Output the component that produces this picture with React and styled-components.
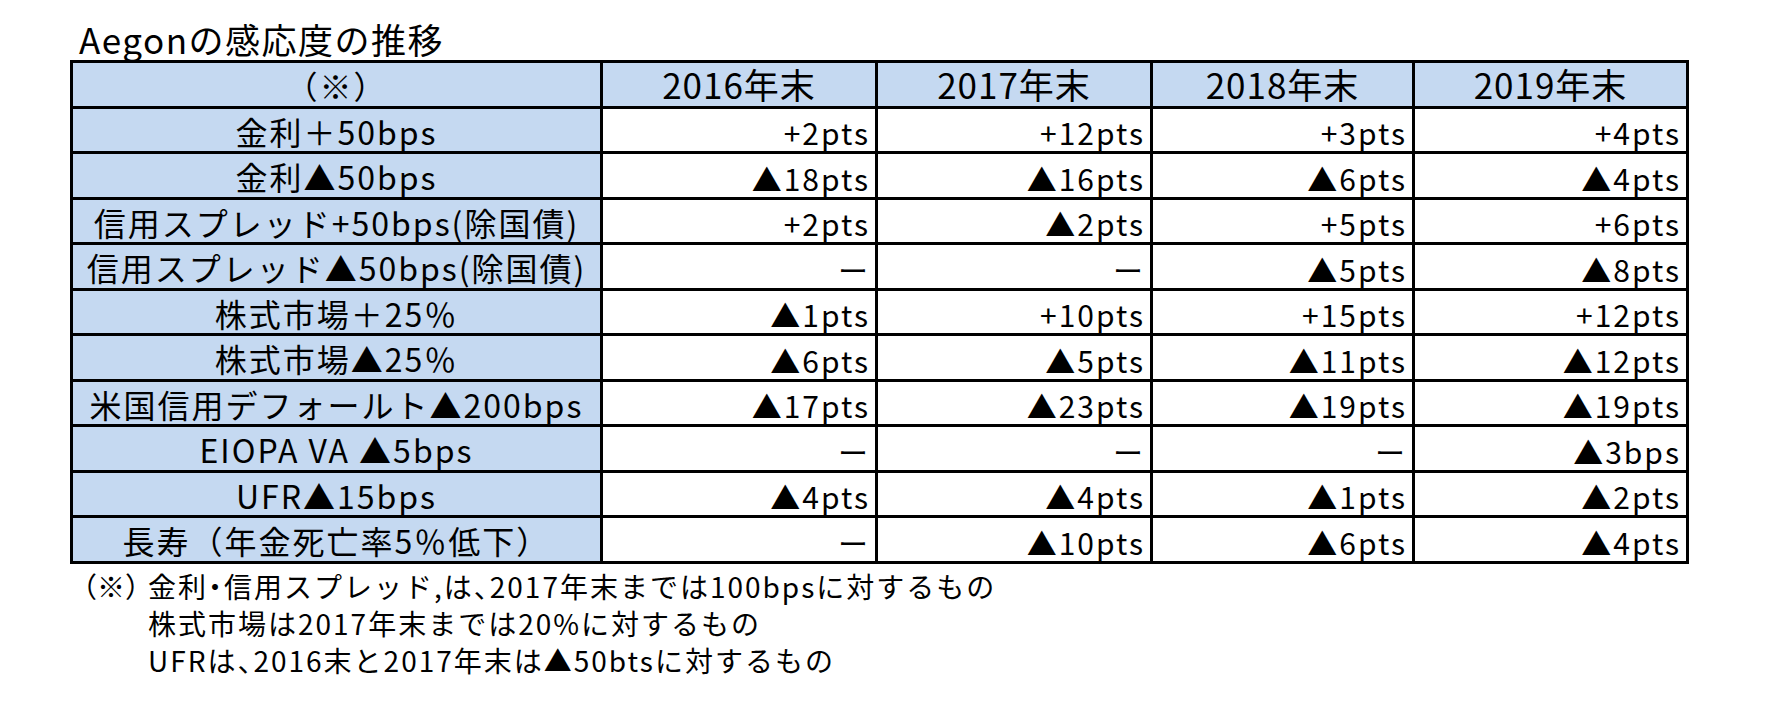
import React from 'react'
import styled, { createGlobalStyle } from 'styled-components'

const GlobalStyle = createGlobalStyle`
  html, body {
    margin: 0;
    padding: 0;
    background: #fff;
  }
  body {
    font-family: "Noto Sans CJK JP", "Noto Sans", sans-serif;
    color: #000;
  }
`

const Page = styled.div`
  width: 1772px;
  height: 703px;
  padding: 20px 0 0 70px;
  box-sizing: border-box;
`

const Title = styled.div`
  font-size: 35px;
  line-height: 38px;
  letter-spacing: 1.5px;
  margin: 0 0 2px 9px;
  white-space: nowrap;
`

const Table = styled.div`
  display: grid;
  grid-template-columns: 527px 272px 272px 259px 271px;
  grid-auto-rows: 42.5px;
  gap: 3px;
  width: fit-content;
  border: 3px solid #000;
  background: #000;
`

const Cell = styled.div`
  display: flex;
  align-items: flex-end;
  justify-content: ${p => (p.$right ? 'flex-end' : 'center')};
  padding: 0 ${p => (p.$right ? '5px' : '0')} 1px 0;
  background: ${p => (p.$blue ? '#c5d9f1' : '#fff')};
  font-size: ${p => p.$size}px;
  line-height: ${p => (p.$size > 33 ? 1.15 : 1.2)};
  letter-spacing: ${p => p.$spacing}px;
  white-space: nowrap;
`

const Notes = styled.div`
  display: grid;
  grid-template-columns: 66px auto;
  margin: 4px 0 0 12px;
  font-size: 28px;
  line-height: 37px;
  letter-spacing: 2px;
  white-space: nowrap;
  font-feature-settings: "halt";
`

const Mark = styled.span`
  grid-column: 1;
  margin-left: -13px;
  letter-spacing: 0;
  font-feature-settings: normal;
`

const NoteLine = styled.span`
  grid-column: 2;
`

const years = ['2016年末', '2017年末', '2018年末', '2019年末']

const rows = [
  ['金利＋50bps', '+2pts', '+12pts', '+3pts', '+4pts'],
  ['金利▲50bps', '▲18pts', '▲16pts', '▲6pts', '▲4pts'],
  ['信用スプレッド+50bps(除国債)', '+2pts', '▲2pts', '+5pts', '+6pts'],
  ['信用スプレッド▲50bps(除国債)', 'ー', 'ー', '▲5pts', '▲8pts'],
  ['株式市場＋25％', '▲1pts', '+10pts', '+15pts', '+12pts'],
  ['株式市場▲25％', '▲6pts', '▲5pts', '▲11pts', '▲12pts'],
  ['米国信用デフォールト▲200bps', '▲17pts', '▲23pts', '▲19pts', '▲19pts'],
  ['EIOPA VA ▲5bps', 'ー', 'ー', 'ー', '▲3bps'],
  ['UFR▲15bps', '▲4pts', '▲4pts', '▲1pts', '▲2pts'],
  ['長寿（年金死亡率5％低下）', 'ー', '▲10pts', '▲6pts', '▲4pts'],
]

const notes = [
  '金利・信用スプレッド,は、2017年末までは100bpsに対するもの',
  '株式市場は2017年末までは20%に対するもの',
  'UFRは、2016末と2017年末は▲50btsに対するもの',
]

export default function App() {
  return (
    <Page>
      <GlobalStyle />
      <Title>Aegonの感応度の推移</Title>
      <Table>
        <Cell $blue $size={32} $spacing={2}>（※）</Cell>
        {years.map(y => (
          <Cell key={y} $blue $size={35} $spacing={1}>{y}</Cell>
        ))}
        {rows.map(([label, ...values]) => (
          <React.Fragment key={label}>
            <Cell $blue $size={32} $spacing={2}>{label}</Cell>
            {values.map((v, i) => (
              <Cell key={i} $right $size={30} $spacing={2}>{v}</Cell>
            ))}
          </React.Fragment>
        ))}
      </Table>
      <Notes>
        <Mark>（※）</Mark>
        {notes.map(n => (
          <NoteLine key={n}>{n}</NoteLine>
        ))}
      </Notes>
    </Page>
  )
}
